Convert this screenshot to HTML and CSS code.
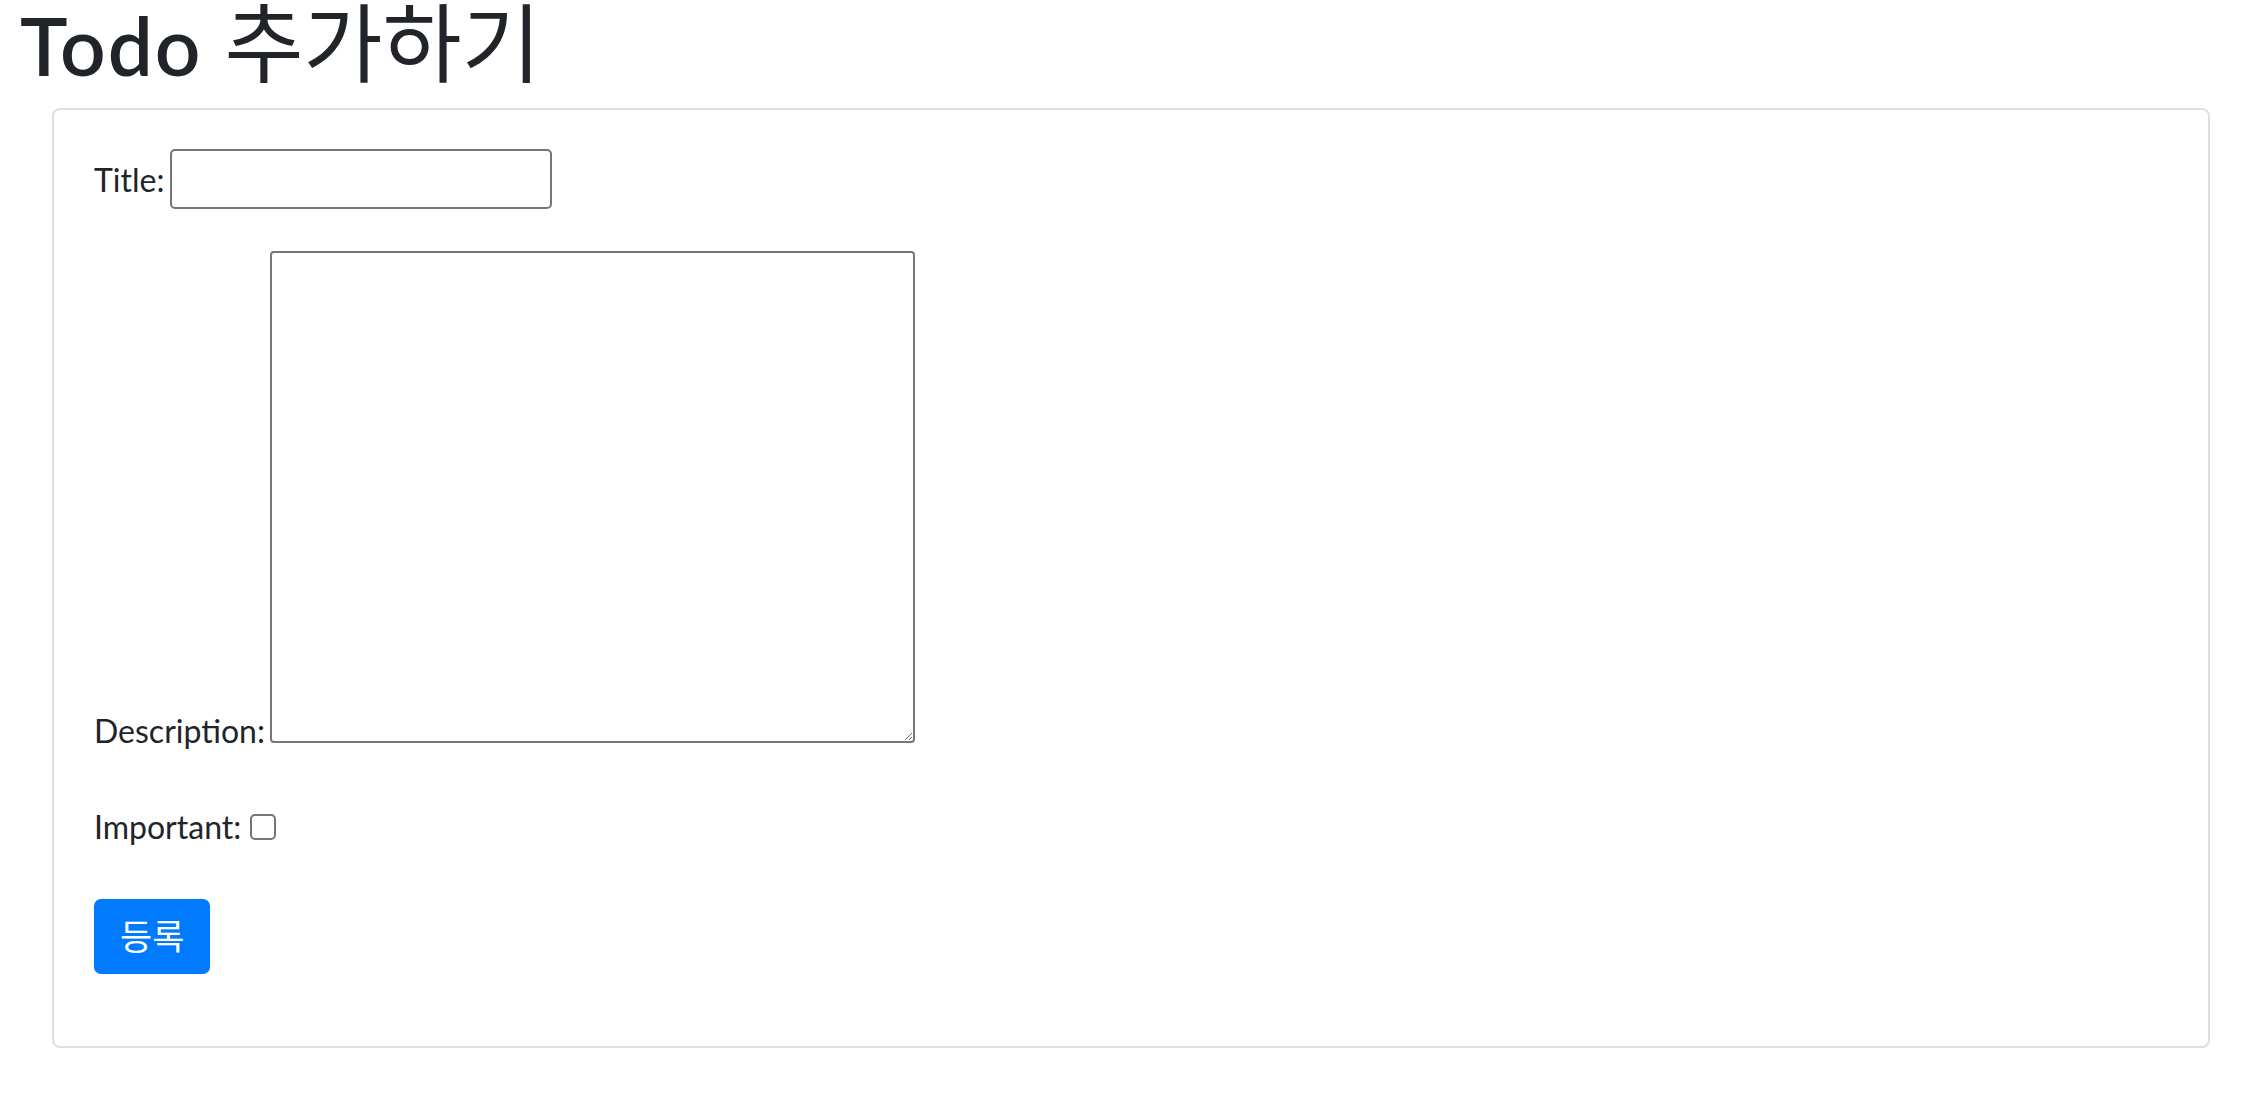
FILE: index.html
```html
<!DOCTYPE html>
<html lang="ko">
<head>
    <meta charset="UTF-8">
    <meta name="viewport" content="width=device-width, initial-scale=1.0">
    <title>Todo 추가하기</title>
    <link rel="stylesheet" href="styles.css">
</head>
<body>

<h1 class="page-title">Todo <span class="page-title-ko">추가하기</span></h1>

<div class="card">
    <form class="card-body" onsubmit="return false;">
        <div class="field field-title">
            <label for="title">Title:</label>
            <input type="text" id="title" class="text-input">
        </div>
        <div class="field">
            <label for="description">Description:</label>
            <textarea id="description" class="text-area"></textarea>
        </div>
        <div class="field">
            <label for="important">Important:</label>
            <input type="checkbox" id="important" class="check">
        </div>
        <div class="actions">
            <button type="submit" class="btn-primary">등록</button>
        </div>
    </form>
</div>

</body>
</html>
```

FILE: styles.css
```css
body {
    margin: 0;
    font-family: "Lato", "Noto Sans CJK KR", sans-serif;
    font-size: 32px;
    line-height: 48px;
    color: #212529;
    background: #fff;
}

.page-title {
    margin: 0 0 18px 20px;
    font-size: 80px;
    line-height: 90px;
    font-weight: 600;
    letter-spacing: 2px;
}

.page-title-ko {
    font-family: "Noto Sans CJK KR", sans-serif;
    font-size: 86px;
    font-weight: 400;
    line-height: 76px;
    letter-spacing: 0;
}

.card {
    margin: 0 56px 0 52px;
    border: 2px solid #dfdfdf;
    border-radius: 8px;
}

.card-body {
    padding: 39px 40px 40px;
}

.field {
    margin-bottom: 48px;
    word-spacing: -3px;
}

.field-title {
    margin-bottom: 42px;
}

.text-input {
    box-sizing: border-box;
    width: 382px;
    height: 60px;
    padding: 0 6px;
    border: 2px solid #767676;
    border-radius: 5px;
    font: inherit;
    line-height: normal;
    word-spacing: normal;
}

.text-area {
    box-sizing: border-box;
    width: 645px;
    height: 492px;
    margin: 0;
    padding: 4px 6px;
    border: 2px solid #767676;
    border-radius: 4px;
    font: inherit;
    word-spacing: normal;
    resize: both;
    overflow: auto;
}

.check {
    appearance: none;
    -webkit-appearance: none;
    box-sizing: border-box;
    width: 26px;
    height: 26px;
    margin: 0 0 0 4px;
    border: 2px solid #767676;
    border-radius: 5px;
    background: #fff;
    vertical-align: -1px;
}

.actions {
    margin-bottom: 32px;
}

.btn-primary {
    padding: 12px 24px;
    border: 2px solid #007bff;
    border-radius: 7px;
    background-color: #007bff;
    color: #fff;
    font-family: "Lato", "Noto Sans CJK KR", sans-serif;
    font-size: 35px;
    line-height: 47px;
    cursor: pointer;
}
```
